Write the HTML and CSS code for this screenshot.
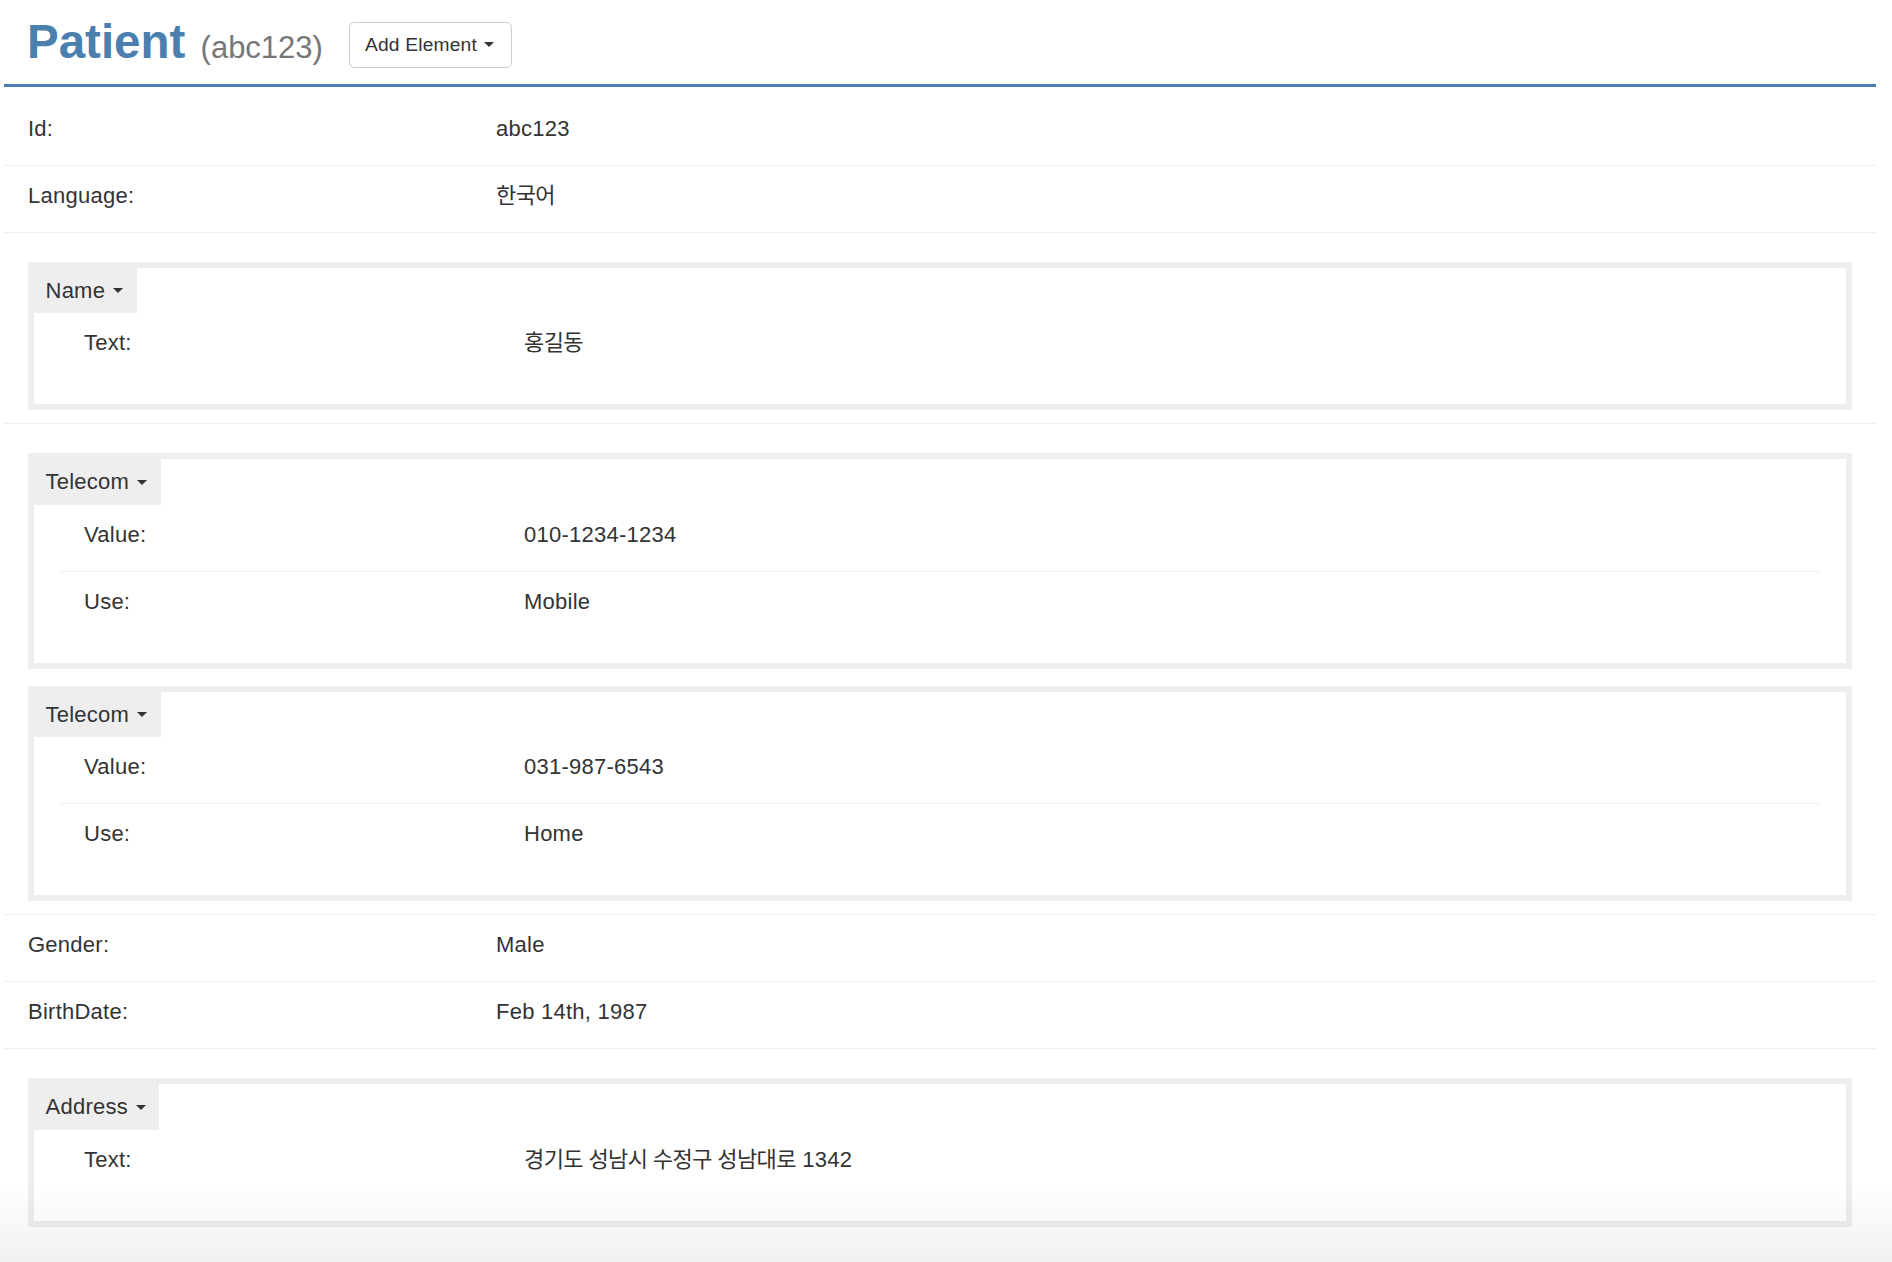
FILE: index.html
```html
<!DOCTYPE html>
<html lang="ko">
<head>
<meta charset="utf-8">
<title>Patient</title>
<link rel="stylesheet" href="styles.css">
</head>
<body>
<div class="page">
  <header class="page-header">
    <h1 class="title">Patient <small class="title-id">(abc123)</small></h1>
    <button class="btn" type="button">Add Element <span class="caret caret-sm"></span></button>
  </header>

  <div class="fields">
    <div class="kv"><div class="k">Id:</div><div class="v">abc123</div></div>
    <div class="kv"><div class="k">Language:</div><div class="v"><span class="ko">한국어</span></div></div>

    <div class="group">
      <div class="box">
        <div class="tab">Name <span class="caret"></span></div>
        <div class="box-body">
          <div class="kv"><div class="k">Text:</div><div class="v"><span class="ko">홍길동</span></div></div>
        </div>
      </div>
    </div>

    <div class="group">
      <div class="box">
        <div class="tab">Telecom <span class="caret"></span></div>
        <div class="box-body">
          <div class="kv"><div class="k">Value:</div><div class="v">010-1234-1234</div></div>
          <div class="kv"><div class="k">Use:</div><div class="v">Mobile</div></div>
        </div>
      </div>
      <div class="box">
        <div class="tab">Telecom <span class="caret"></span></div>
        <div class="box-body">
          <div class="kv"><div class="k">Value:</div><div class="v">031-987-6543</div></div>
          <div class="kv"><div class="k">Use:</div><div class="v">Home</div></div>
        </div>
      </div>
    </div>

    <div class="kv"><div class="k">Gender:</div><div class="v">Male</div></div>
    <div class="kv"><div class="k">BirthDate:</div><div class="v">Feb 14th, 1987</div></div>

    <div class="group">
      <div class="box">
        <div class="tab">Address <span class="caret"></span></div>
        <div class="box-body">
          <div class="kv"><div class="k">Text:</div><div class="v"><span class="ko">경기도 성남시 수정구 성남대로</span> 1342</div></div>
        </div>
      </div>
    </div>
  </div>
</div>
<div class="bottom-fade"></div>
</body>
</html>
```

FILE: styles.css
```css
* { box-sizing: border-box; }

body {
  margin: 0;
  font-family: "Liberation Sans", "Noto Sans CJK KR", Arial, sans-serif;
  font-size: 22px;
  line-height: 31.43px;
  letter-spacing: 0.25px;
  color: #333;
  background: #fff;
}

.page {
  padding: 0 16px 0 4px;
}

.page-header {
  display: flex;
  align-items: flex-start;
  padding: 0 23px 16px;
  border-bottom: 3px solid #4a7fae;
}

.title {
  margin: 16px 0 0;
  font-size: 47.5px;
  line-height: 52px;
  font-weight: bold;
  letter-spacing: 0;
  color: #4a7fae;
  white-space: nowrap;
}

.title-id {
  margin-left: 2px;
  font-size: 31px;
  line-height: 1;
  font-weight: normal;
  color: #777;
}

.btn {
  margin: 21.5px 0 0 26px;
  height: 46px;
  padding: 0 17px 0 15px;
  display: flex;
  align-items: center;
  gap: 7px;
  font-family: "Liberation Sans", Arial, sans-serif;
  font-size: 19.2px;
  letter-spacing: 0.2px;
  color: #333;
  background: #fff;
  border: 1px solid #ccc;
  border-radius: 5.5px;
}

.caret {
  display: inline-block;
  width: 0;
  height: 0;
  border-top: 5.5px solid #333;
  border-left: 5.5px solid transparent;
  border-right: 5.5px solid transparent;
}

.caret-sm {
  border-top-width: 5px;
  border-left-width: 5px;
  border-right-width: 5px;
}

.fields {
  margin-top: 12px;
}

.kv {
  display: grid;
  grid-template-columns: 25% 75%;
  box-sizing: content-box;
  height: 52px;
  padding-top: 14px;
  border-bottom: 1px solid #eee;
}

.k, .v {
  padding: 0 23px 0 24px;
  white-space: nowrap;
}

.ko {
  letter-spacing: -0.6px;
}

.group {
  display: flex;
  flex-direction: column;
  gap: 17px;
  padding: 29px 24px 13px;
  border-bottom: 1px solid #eee;
}

.fields > .group:last-child {
  border-bottom: none;
}

.box {
  border: 6px solid #eee;
}

.tab {
  display: flex;
  align-items: center;
  gap: 8px;
  width: max-content;
  padding: 7px 13.5px 7px 11.5px;
  background: #eee;
}

.box-body {
  padding: 0 26px 25px;
}

.box-body .kv:last-child {
  border-bottom: none;
}

.bottom-fade {
  position: fixed;
  left: 0;
  right: 0;
  bottom: 0;
  height: 80px;
  background: linear-gradient(to bottom, rgba(0, 0, 0, 0), rgba(0, 0, 0, 0.055));
  pointer-events: none;
}
```
